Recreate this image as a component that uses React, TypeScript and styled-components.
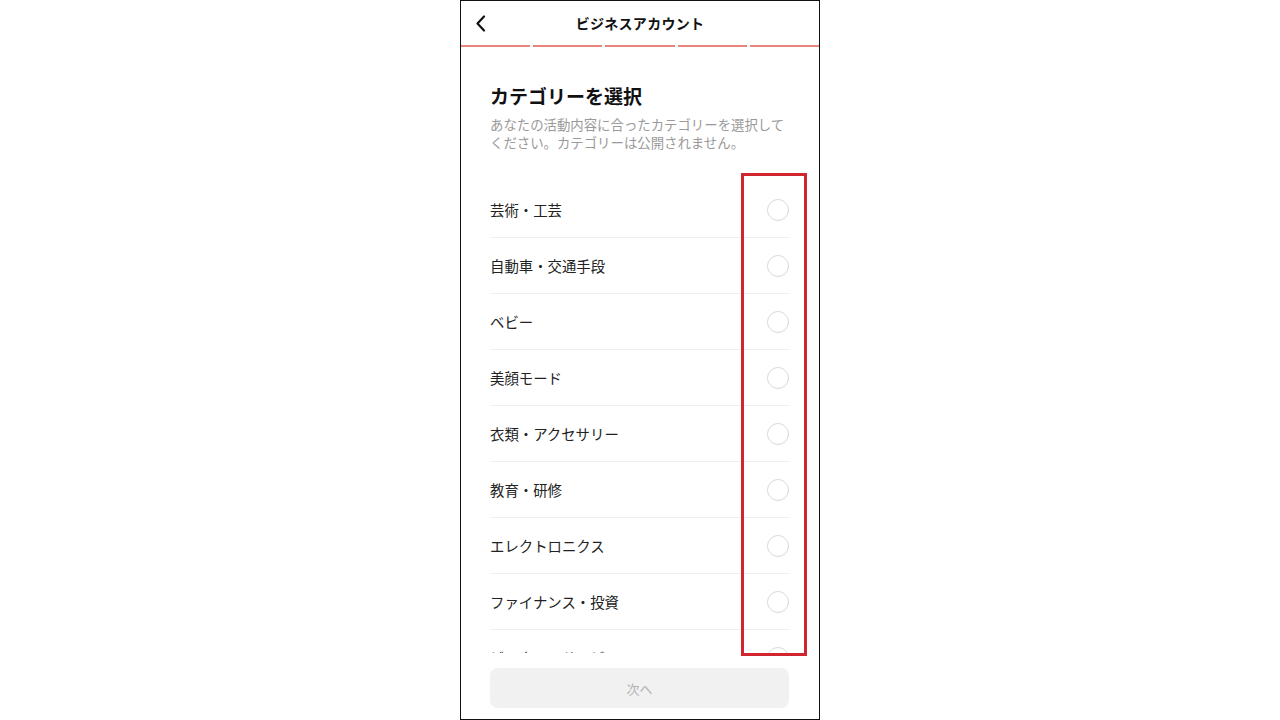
import React from "react";
import styled, { createGlobalStyle } from "styled-components";

const categories = [
  "芸術・工芸",
  "自動車・交通手段",
  "ベビー",
  "美顔モード",
  "衣類・アクセサリー",
  "教育・研修",
  "エレクトロニクス",
  "ファイナンス・投資",
  "ビジネス・サービス",
];

const App = () => {
  return (
    <Stage>
      <GlobalStyle />
      <Phone>
        <Header>
          <BackButton aria-label="back">
            <svg width="12" height="17" viewBox="0 0 12 17">
              <path
                d="M9 1.5 L2.5 8.5 L9 15.5"
                fill="none"
                stroke="#111"
                strokeWidth="2.2"
                strokeLinecap="round"
                strokeLinejoin="round"
              />
            </svg>
          </BackButton>
          <Title>ビジネスアカウント</Title>
          <span />
        </Header>
        <Progress>
          {[0, 1, 2, 3, 4].map((i) => (
            <Step key={i} />
          ))}
        </Progress>
        <Body>
          <Heading>カテゴリーを選択</Heading>
          <Lead>
            あなたの活動内容に合ったカテゴリーを選択して
            <br />
            ください。カテゴリーは公開されません。
          </Lead>
          <List>
            {categories.map((name) => (
              <Row key={name}>
                <Label>{name}</Label>
                <Radio />
              </Row>
            ))}
          </List>
        </Body>
        <Footer>
          <NextButton disabled>次へ</NextButton>
        </Footer>
        <Highlight />
      </Phone>
    </Stage>
  );
};

export default App;

const GlobalStyle = createGlobalStyle`
  html, body {
    margin: 0;
    padding: 0;
    background: #fff;
  }
  body {
    font-family: "Noto Sans CJK JP", "Noto Sans", sans-serif;
  }
`;

const Stage = styled.div`
  width: 1280px;
  height: 720px;
  display: flex;
  justify-content: center;
  background: #fff;
`;

const Phone = styled.div`
  position: relative;
  width: 360px;
  height: 720px;
  box-sizing: border-box;
  border: 1px solid #111;
  display: flex;
  flex-direction: column;
  overflow: hidden;
  background: #fff;
`;

const Header = styled.div`
  height: 44px;
  display: grid;
  grid-template-columns: 48px 1fr 48px;
  align-items: center;
`;

const BackButton = styled.button`
  border: none;
  background: none;
  padding: 0 0 0 14px;
  display: flex;
  align-items: center;
  height: 44px;
`;

const Title = styled.div`
  text-align: center;
  font-size: 14px;
  font-weight: 700;
  color: #111;
  letter-spacing: 0.3px;
`;

const Progress = styled.div`
  display: flex;
  gap: 3px;
  height: 2px;
`;

const Step = styled.div`
  flex: 1;
  background: #e9857d;
`;

const Body = styled.div`
  flex: 1;
  min-height: 0;
  display: flex;
  flex-direction: column;
  padding: 0 29px;
`;

const Heading = styled.h1`
  margin: 36px 0 0;
  font-size: 19px;
  line-height: 26px;
  font-weight: 700;
  color: #111;
`;

const Lead = styled.p`
  margin: 7px 0 0;
  font-size: 13.4px;
  line-height: 17.5px;
  color: #9a9a9a;
`;

const List = styled.div`
  flex: 1;
  min-height: 0;
  overflow: hidden;
  margin-top: 31px;
`;

const Row = styled.div`
  height: 56px;
  box-sizing: border-box;
  display: flex;
  align-items: center;
  justify-content: space-between;
  border-bottom: 1px solid #efefef;
`;

const Label = styled.span`
  font-size: 14.4px;
  color: #222;
`;

const Radio = styled.span`
  width: 22px;
  height: 22px;
  box-sizing: border-box;
  border-radius: 50%;
  border: 1.5px solid #d9d9d9;
  margin-right: 1px;
`;

const Footer = styled.div`
  padding: 15px 30px 11px 29px;
`;

const NextButton = styled.button`
  width: 100%;
  height: 40px;
  border: none;
  border-radius: 8px;
  background: #f1f1f1;
  color: #b3b3b3;
  font-family: inherit;
  font-size: 13px;
`;

const Highlight = styled.div`
  position: absolute;
  left: 280px;
  top: 172px;
  width: 66px;
  height: 483px;
  box-sizing: border-box;
  border: 3px solid #d1262e;
  pointer-events: none;
`;
